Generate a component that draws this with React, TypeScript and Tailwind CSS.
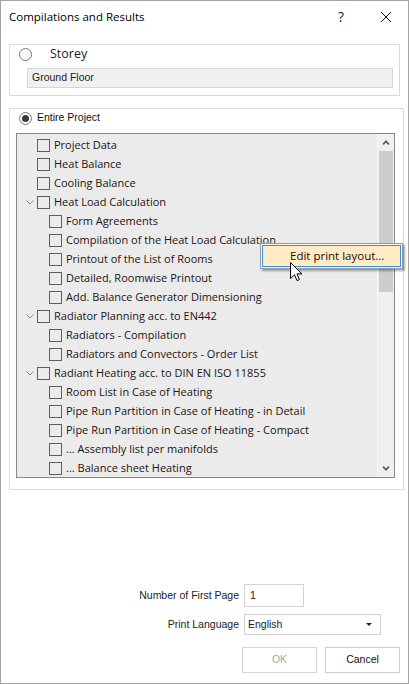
import React from 'react';

type Row = { label: string; level: 1 | 2; expanded?: boolean };

const rows: Row[] = [
  { label: 'Project Data', level: 1 },
  { label: 'Heat Balance', level: 1 },
  { label: 'Cooling Balance', level: 1 },
  { label: 'Heat Load Calculation', level: 1, expanded: true },
  { label: 'Form Agreements', level: 2 },
  { label: 'Compilation of the Heat Load Calculation', level: 2 },
  { label: 'Printout of the List of Rooms', level: 2 },
  { label: 'Detailed, Roomwise Printout', level: 2 },
  { label: 'Add. Balance Generator Dimensioning', level: 2 },
  { label: 'Radiator Planning acc. to EN442', level: 1, expanded: true },
  { label: 'Radiators - Compilation', level: 2 },
  { label: 'Radiators and Convectors - Order List', level: 2 },
  { label: 'Radiant Heating acc. to DIN EN ISO 11855', level: 1, expanded: true },
  { label: 'Room List in Case of Heating', level: 2 },
  { label: 'Pipe Run Partition in Case of Heating - in Detail', level: 2 },
  { label: 'Pipe Run Partition in Case of Heating - Compact', level: 2 },
  { label: '... Assembly list per manifolds', level: 2 },
  { label: '... Balance sheet Heating', level: 2 },
];

function Radio({ checked }: { checked?: boolean }) {
  return (
    <span className="flex h-[13px] w-[13px] shrink-0 items-center justify-center rounded-full border border-[#7a7a7a] bg-[#fafafa]">
      {checked && <span className="h-[7px] w-[7px] rounded-full bg-[#3a3a3a]" />}
    </span>
  );
}

function TreeRow({ row }: { row: Row }) {
  return (
    <div className="flex h-[19px] items-center">
      {row.level === 1 ? (
        <div className="flex w-[20px] items-center pl-[9px]">
          {row.expanded && (
            <svg width="8" height="5" viewBox="0 0 8 5">
              <path d="M0.5 0.5 L4 4 L7.5 0.5" fill="none" stroke="#8c8c8c" strokeWidth="1" />
            </svg>
          )}
        </div>
      ) : (
        <div className="w-[32px]" />
      )}
      <span className="h-[13px] w-[13px] shrink-0 border border-[#5f5f5f]" />
      <span className="ml-[4px] whitespace-nowrap text-[11px] text-[#1e1414]">{row.label}</span>
    </div>
  );
}

function ScrollChevron({ down }: { down?: boolean }) {
  return (
    <svg width="8" height="5" viewBox="0 0 8 5" className={down ? 'rotate-180' : ''}>
      <path d="M1 4.3 L4 1.3 L7 4.3" fill="none" stroke="#606060" strokeWidth="1.7" />
    </svg>
  );
}

export default function App() {
  return (
    <div className="relative h-[684px] w-[409px] overflow-hidden border border-[#a3a3a3] bg-white font-['Open_Sans',sans-serif] text-black">
      {/* title bar */}
      <div className="flex h-[31px] items-center pl-[8px]">
        <span className="text-[11.5px]">Compilations and Results</span>
        <span className="ml-auto text-[14px] leading-none text-[#222]">?</span>
        <svg width="10" height="10" viewBox="0 0 10 10" className="ml-[37px] mr-[17px]">
          <path d="M0 0 L10 10 M10 0 L0 10" stroke="#111" strokeWidth="1" />
        </svg>
      </div>

      {/* storey group */}
      <div className="ml-[8px] mt-[12px] h-[52px] w-[391px] border border-[#dadada]">
        <div className="flex h-[18px] items-center pl-[9px]">
          <Radio />
          <span className="ml-[18px] text-[12.5px] text-[#222]">Storey</span>
        </div>
        <div className="ml-[17px] mt-[5px] flex h-[20px] w-[366px] items-center border border-[#d6d6d6] bg-[#f0f0f0] pl-[4px] font-['Liberation_Sans',Arial,sans-serif] text-[10.5px] text-[#222]">
          Ground Floor
        </div>
      </div>

      {/* entire project group */}
      <div className="ml-[8px] mt-[12px] h-[382px] w-[395px] border border-[#dadada]">
        <div className="flex h-[18px] items-center pl-[9px]">
          <Radio checked />
          <span className="ml-[5px] font-['Liberation_Sans',Arial,sans-serif] text-[10.5px] text-[#111]">
            Entire Project
          </span>
        </div>
        <div className="ml-[6px] mt-[6px] flex h-[345px] w-[379px] border border-[#828790] bg-[#ebebeb]">
          <div className="flex-1 overflow-hidden pt-[2px]">
            {rows.map((row) => (
              <TreeRow key={row.label} row={row} />
            ))}
          </div>
          <div className="flex w-[17px] flex-col border-l border-[#f7f7f7] bg-[#f0f0f0]">
            <div className="flex h-[17px] items-center justify-center">
              <ScrollChevron />
            </div>
            <div className="mx-[1px] h-[141px] bg-[#cdcdcd]" />
            <div className="flex-1" />
            <div className="flex h-[17px] items-center justify-center">
              <ScrollChevron down />
            </div>
          </div>
        </div>
      </div>

      {/* page number + language */}
      <div className="mt-[94px] flex flex-col font-['Liberation_Sans',Arial,sans-serif] text-[10.5px] text-[#222]">
        <div className="flex items-center">
          <span className="w-[238px] text-right">Number of First Page</span>
          <div className="ml-[5px] flex h-[23px] w-[60px] items-start border border-[#d4d4d4] pl-[5px] pt-[3px]">
            1
          </div>
        </div>
        <div className="mt-[7px] flex items-center">
          <span className="w-[238px] text-right">Print Language</span>
          <div className="ml-[5px] flex h-[21px] w-[137px] items-center border border-[#cfcfcf] pl-[3px]">
            <span>English</span>
            <svg width="6" height="3" viewBox="0 0 6 3" className="ml-auto mr-[8px]">
              <path d="M0 0 L6 0 L3 3 Z" fill="#222" />
            </svg>
          </div>
        </div>
        <div className="mt-[12px] flex justify-end gap-[8px] pr-[8px]">
          <button className="flex h-[26px] w-[75px] items-center justify-center border border-[#d4d4d4] bg-white text-[#a6a6a6]">
            OK
          </button>
          <button className="flex h-[26px] w-[75px] items-center justify-center border border-[#cfcfcf] bg-white text-[#111]">
            Cancel
          </button>
        </div>
      </div>

      {/* context menu over the tree */}
      <div className="absolute left-[259px] top-[242px] h-[26px] w-[143px] border border-[#9a9a9a] bg-[#fdf8ec] p-[1px] shadow-[2px_2px_2px_rgba(0,0,0,0.35)]">
        <div className="flex h-full items-center border border-[#3a8ee6] bg-[#ffecc4] pl-[27px] text-[11.5px] text-[#1e0a0a]">
          Edit print layout...
        </div>
      </div>

      {/* mouse pointer */}
      <svg width="13" height="20" viewBox="0 0 13 20" className="absolute left-[289px] top-[261px]">
        <path
          d="M0.5 0.5 L0.5 16.5 L4.5 12.8 L7 18.6 L9.4 17.6 L7 11.9 L12 11.9 Z"
          fill="#fff"
          stroke="#000"
          strokeWidth="1"
          strokeLinejoin="miter"
        />
      </svg>
    </div>
  );
}
